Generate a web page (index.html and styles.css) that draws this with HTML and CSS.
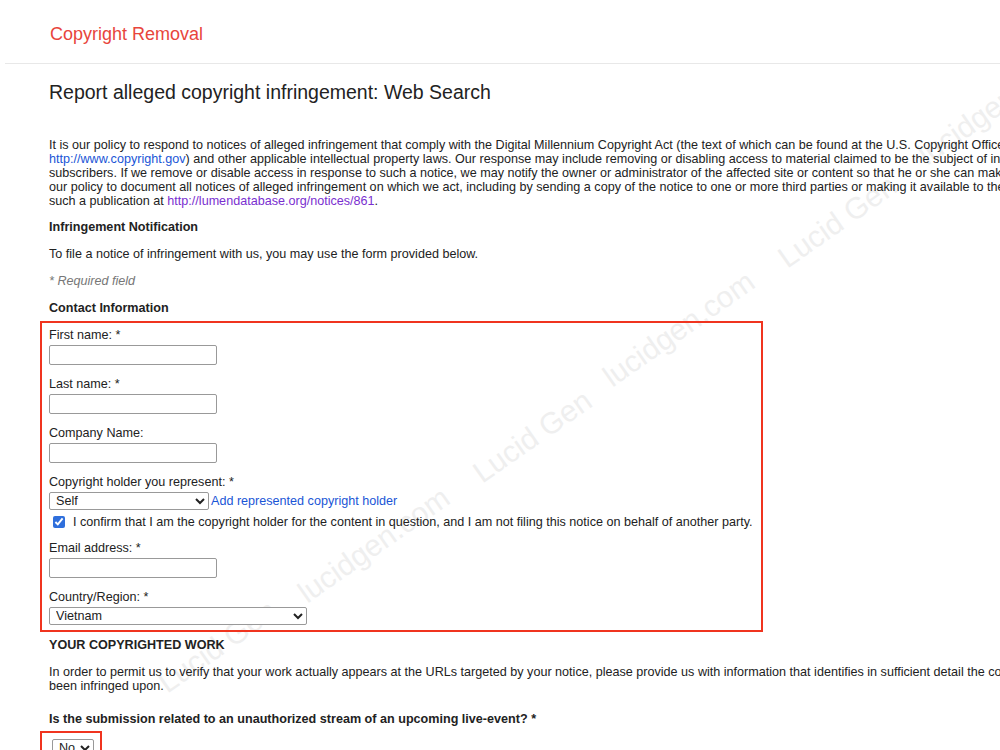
FILE: index.html
```html
<!DOCTYPE html>
<html lang="en">
<head>
  <meta charset="UTF-8">
  <title>Copyright Removal</title>
  <link rel="stylesheet" href="styles.css">
</head>
<body>
  <!-- watermark, sits behind the form -->
  <span class="wm" style="left:615px;top:362px">lucidgen.com</span>
  <span class="wm" style="left:485px;top:458px">Lucid Gen</span>
  <span class="wm" style="left:310px;top:578px">lucidgen.com</span>
  <span class="wm" style="left:170px;top:668px">Lucid Gen</span>
  <span class="wm" style="left:790px;top:243px">Lucid Gen</span>
  <span class="wm" style="left:930px;top:140px">lucidgen.com</span>

  <div class="topbar">
    <span class="brand">Copyright Removal</span>
  </div>

  <div class="page">
    <h1>Report alleged copyright infringement: Web Search</h1>

    <p class="intro">
      It is our policy to respond to notices of alleged infringement that comply with the Digital Millennium Copyright Act (the text of which can be found at the U.S. Copyright Office Web Site,<br>
      <a href="#" class="link">http://www.copyright.gov</a>) and other applicable intellectual property laws. Our response may include removing or disabling access to material claimed to be the subject of infringing activity and/or terminating<br>
      subscribers. If we remove or disable access in response to such a notice, we may notify the owner or administrator of the affected site or content so that he or she can make a counter notification. It is also<br>
      our policy to document all notices of alleged infringement on which we act, including by sending a copy of the notice to one or more third parties or making it available to the public. You can see an example of<br>
      such a publication at <a href="#" class="link visited">http://lumendatabase.org/notices/861</a>.
    </p>

    <h3>Infringement Notification</h3>
    <p>To file a notice of infringement with us, you may use the form provided below.</p>
    <p class="required">* Required field</p>

    <h3 class="contact-title">Contact Information</h3>

    <div class="marked contact">
      <div class="field">
        <label>First name: *</label>
        <input type="text">
      </div>
      <div class="field">
        <label>Last name: *</label>
        <input type="text">
      </div>
      <div class="field">
        <label>Company Name:</label>
        <input type="text">
      </div>
      <div class="field">
        <label>Copyright holder you represent: *</label>
        <div class="holder-row">
          <select class="holder"><option>Self</option></select>
          <a href="#" class="link">Add represented copyright holder</a>
        </div>
        <div class="confirm">
          <input type="checkbox" checked>
          <span>I confirm that I am the copyright holder for the content in question, and I am not filing this notice on behalf of another party.</span>
        </div>
      </div>
      <div class="field">
        <label>Email address: *</label>
        <input type="text">
      </div>
      <div class="field last">
        <label>Country/Region: *</label>
        <select class="country"><option>Vietnam</option></select>
      </div>
    </div>

    <h3>YOUR COPYRIGHTED WORK</h3>
    <p class="wide">
      In order to permit us to verify that your work actually appears at the URLs targeted by your notice, please provide us with information that identifies in sufficient detail the copyrighted work that you believe has<br>
      been infringed upon.
    </p>

    <h3 class="question">Is the submission related to an unauthorized stream of an upcoming live-event? *</h3>
    <div class="marked live">
      <select class="yesno"><option>No</option></select>
    </div>
  </div>
</body>
</html>
```

FILE: styles.css
```css
body {
  margin: 0;
  font-family: "Liberation Sans", Arial, sans-serif;
  font-size: 12.6px;
  line-height: 14px;
  color: #222;
  background: #fff;
  overflow: hidden;
  position: relative;
  height: 750px;
}
.topbar {
  position: relative;
  margin-left: 5px;
  height: 64px;
  border-bottom: 1px solid #e8e8e8;
  padding: 24px 0 0 45px;
  box-sizing: border-box;
}
.brand {
  color: #e8453c;
  font-size: 18px;
  line-height: 20px;
}
.page {
  position: relative;
  padding-left: 49px;
  width: 1300px;
}
h1 {
  margin: 16px 0 33px;
  font-size: 19.5px;
  line-height: 24px;
  font-weight: normal;
  color: #222;
}
p,
h3 {
  margin: 0 0 13px;
  white-space: nowrap;
}
h3 {
  font-size: 12.6px;
  font-weight: bold;
}
.intro {
  padding-top: 1px;
  margin-bottom: 12px;
}
.required {
  color: #777;
  font-style: italic;
}
.link {
  color: #1a55d6;
  text-decoration: none;
}
.link.visited {
  color: #7a2fd0;
}
.contact-title {
  margin-bottom: 6px;
}
.marked {
  border: 2px solid #f0341f;
  margin-left: -9px;
  padding-left: 7px;
}
.contact {
  width: 712px;
  padding-top: 5px;
  padding-bottom: 5px;
  margin-bottom: 6px;
}
.field {
  margin-bottom: 12px;
}
.field.last {
  margin-bottom: 0;
}
.field label {
  display: block;
  margin-bottom: 3px;
}
input[type="text"] {
  display: block;
  box-sizing: border-box;
  width: 168px;
  height: 20px;
  border: 1px solid #999;
  border-radius: 2px;
  background: #fff;
  margin: 0;
  padding: 1px 3px;
}
select {
  font-family: "Liberation Sans", Arial, sans-serif;
  font-size: 12.6px;
  box-sizing: border-box;
  border: 1px solid #999;
  border-radius: 2px;
  background: #fff;
  color: #222;
  margin: 0;
  padding: 0 2px;
}
.holder-row {
  display: flex;
  align-items: center;
  gap: 2px;
}
.holder {
  width: 160px;
  height: 18px;
}
.confirm {
  display: flex;
  align-items: center;
  margin-top: 5px;
  margin-bottom: 3px;
  height: 14px;
}
.confirm input {
  margin: 0 8px 0 4px;
  width: 12px;
  height: 12px;
  accent-color: #2f6fdc;
}
.country {
  width: 258px;
  height: 18px;
}
.wide {
  margin-bottom: 19px;
}
.question {
  margin-bottom: 5px;
}
.live {
  width: 62px;
  height: 30px;
  padding: 6px 0 0 10px;
  margin-left: -9px;
  box-sizing: border-box;
}
.yesno {
  width: 42px;
  height: 18px;
  padding: 0 0 0 2px;
}
.wm {
  position: absolute;
  font-size: 30px;
  line-height: 30px;
  color: #efefef;
  transform: rotate(-35deg);
  transform-origin: left bottom;
  white-space: nowrap;
}
```
